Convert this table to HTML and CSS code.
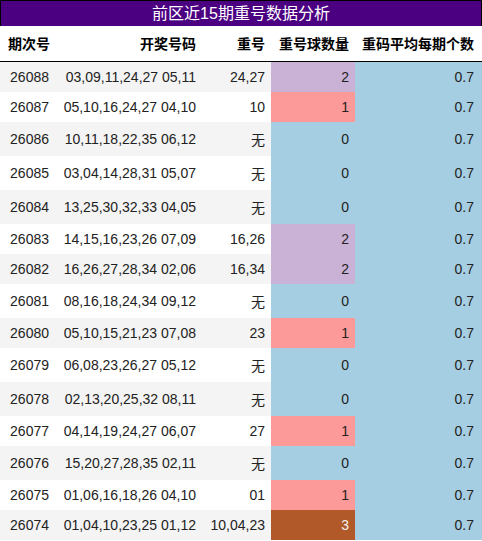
FILE: index.html
```html
<!DOCTYPE html>
<html lang="zh-CN">

<head>
  <meta charset="UTF-8">
  <meta name="viewport" content="width=device-width, initial-scale=1.0">
  <title>前区近15期重号数据分析</title>
  <link rel="stylesheet" href="styles.css">
</head>

<body>
  <div class="title">前区近15期重号数据分析</div>
  <table class="report">
    <colgroup>
      <col class="c-issue">
      <col class="c-draw">
      <col class="c-repeat">
      <col class="c-count">
      <col class="c-avg">
    </colgroup>
    <thead>
      <tr>
        <th class="first">期次号</th>
        <th>开奖号码</th>
        <th>重号</th>
        <th>重号球数量</th>
        <th class="last">重码平均每期个数</th>
      </tr>
    </thead>
    <tbody>
      <tr><td class="issue">26088</td><td>03,09,11,24,27 05,11</td><td>24,27</td><td class="n2">2</td><td class="avg">0.7</td></tr>
      <tr><td class="issue">26087</td><td>05,10,16,24,27 04,10</td><td>10</td><td class="n1">1</td><td class="avg">0.7</td></tr>
      <tr><td class="issue">26086</td><td>10,11,18,22,35 06,12</td><td>无</td><td class="n0">0</td><td class="avg">0.7</td></tr>
      <tr><td class="issue">26085</td><td>03,04,14,28,31 05,07</td><td>无</td><td class="n0">0</td><td class="avg">0.7</td></tr>
      <tr><td class="issue">26084</td><td>13,25,30,32,33 04,05</td><td>无</td><td class="n0">0</td><td class="avg">0.7</td></tr>
      <tr><td class="issue">26083</td><td>14,15,16,23,26 07,09</td><td>16,26</td><td class="n2">2</td><td class="avg">0.7</td></tr>
      <tr><td class="issue">26082</td><td>16,26,27,28,34 02,06</td><td>16,34</td><td class="n2">2</td><td class="avg">0.7</td></tr>
      <tr><td class="issue">26081</td><td>08,16,18,24,34 09,12</td><td>无</td><td class="n0">0</td><td class="avg">0.7</td></tr>
      <tr><td class="issue">26080</td><td>05,10,15,21,23 07,08</td><td>23</td><td class="n1">1</td><td class="avg">0.7</td></tr>
      <tr><td class="issue">26079</td><td>06,08,23,26,27 05,12</td><td>无</td><td class="n0">0</td><td class="avg">0.7</td></tr>
      <tr><td class="issue">26078</td><td>02,13,20,25,32 08,11</td><td>无</td><td class="n0">0</td><td class="avg">0.7</td></tr>
      <tr><td class="issue">26077</td><td>04,14,19,24,27 06,07</td><td>27</td><td class="n1">1</td><td class="avg">0.7</td></tr>
      <tr><td class="issue">26076</td><td>15,20,27,28,35 02,11</td><td>无</td><td class="n0">0</td><td class="avg">0.7</td></tr>
      <tr><td class="issue">26075</td><td>01,06,16,18,26 04,10</td><td>01</td><td class="n1">1</td><td class="avg">0.7</td></tr>
      <tr><td class="issue">26074</td><td>01,04,10,23,25 01,12</td><td>10,04,23</td><td class="n3">3</td><td class="avg">0.7</td></tr>
    </tbody>
  </table>
</body>

</html>
```

FILE: styles.css
```css
body {
  margin: 0;
  width: 482px;
  font-family: "Liberation Sans", "Noto Sans CJK SC", sans-serif;
  color: #222;
}

.title {
  height: 25px;
  line-height: 25px;
  border: 1px solid #000;
  border-bottom: none;
  background: #4b0082;
  color: #fff;
  font-size: 16px;
  text-align: center;
}

.report {
  width: 482px;
  table-layout: fixed;
  border-collapse: collapse;
  font-size: 14px;
}

.c-issue { width: 57px; }
.c-draw { width: 145px; }
.c-repeat { width: 69px; }
.c-count { width: 84px; }
.c-avg { width: 127px; }

.report th {
  padding: 7px 6px 8px 0;
  border-bottom: 1px solid #000;
  color: #000;
  font-weight: bold;
  text-align: right;
  white-space: nowrap;
}

.report th.first {
  padding-left: 8px;
  text-align: left;
}

.report td {
  padding: 7px 6px 7px 0;
  text-align: right;
  white-space: nowrap;
}

.report td.issue {
  padding-right: 8px;
}

.report th.last,
.report td.avg {
  padding-right: 8px;
}

.report tbody tr:nth-child(odd) {
  background: #f4f4f4;
}

.report tbody tr:nth-child(even) {
  background: #fff;
}

/* 重号数量的颜色 */
.report td.n0,
.report td.avg {
  background: #a6cee3;
}

.report td.n1 {
  background: #fb9a99;
}

.report td.n2 {
  background: #cab2d6;
}

.report td.n3 {
  background: #b15928;
  color: #f1f1f1;
}
```
